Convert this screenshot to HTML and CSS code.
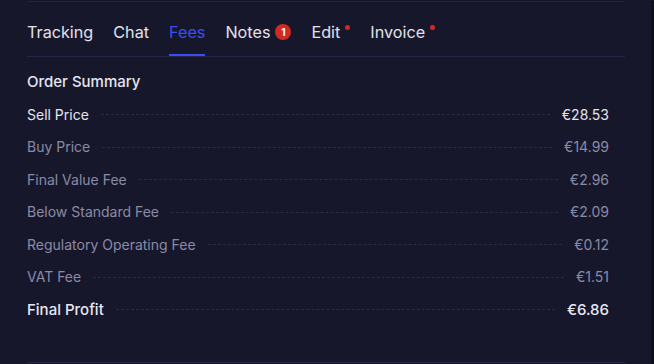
FILE: index.html
```html
<!DOCTYPE html>
<html lang="en">
<head>
  <meta charset="UTF-8" />
  <meta name="viewport" content="width=device-width, initial-scale=1.0"/>
  <title>Order Fees</title>
  <link rel="stylesheet" href="styles.css">
</head>
<body>
  <div class="panel">
    <div class="inner">
      <nav class="tabs">
        <span class="tab">Tracking</span>
        <span class="tab">Chat</span>
        <span class="tab active">Fees</span>
        <span class="tab">Notes <span class="badge">1</span></span>
        <span class="tab">Edit<span class="dot"></span></span>
        <span class="tab">Invoice<span class="dot"></span></span>
      </nav>

      <section class="summary">
        <h2>Order Summary</h2>
        <div class="row strong"><span class="label">Sell Price</span><span class="fill"></span><span class="value">€28.53</span></div>
        <div class="row"><span class="label">Buy Price</span><span class="fill"></span><span class="value">€14.99</span></div>
        <div class="row"><span class="label">Final Value Fee</span><span class="fill"></span><span class="value">€2.96</span></div>
        <div class="row"><span class="label">Below Standard Fee</span><span class="fill"></span><span class="value">€2.09</span></div>
        <div class="row"><span class="label">Regulatory Operating Fee</span><span class="fill"></span><span class="value">€0.12</span></div>
        <div class="row"><span class="label">VAT Fee</span><span class="fill"></span><span class="value">€1.51</span></div>
        <div class="row total"><span class="label">Final Profit</span><span class="fill"></span><span class="value">€6.86</span></div>
      </section>
    </div>
  </div>
</body>
</html>
```

FILE: styles.css
```css
* { box-sizing: border-box; margin: 0; padding: 0; }
html, body { height: 100%; background: #16162a; overflow: hidden; }
body { font-family: Inter, 'Noto Sans', sans-serif; color: #e4e4ee; }

.panel {
  height: 364px;
  width: 654px;
  padding-left: 27px;
  border-right: 3px solid #0f0f1c;
  background: #17172b;
}
.inner {
  width: 598px;
  height: 362px;
  border-top: 1px solid #23233f;
  border-bottom: 1px solid #26264a;
  margin-top: 1px;
}

.tabs {
  display: flex;
  gap: 20px;
  height: 55px;
  border-bottom: 1px solid #25254a;
}
.tab {
  position: relative;
  display: flex;
  align-items: center;
  padding-top: 6px;
  font-size: 16.2px;
  color: #e2e2ec;
}
.tab.active { color: #3b4ef4; }
.tab.active::after {
  content: '';
  position: absolute;
  left: 0; right: 0; bottom: 0;
  height: 2px;
  background: #3b4ef4;
}
.badge {
  display: inline-flex;
  justify-content: center;
  align-items: center;
  width: 16px; height: 16px;
  margin-left: 5px;
  border-radius: 50%;
  background: #d12a22;
  color: #fff;
  font-size: 10px;
  font-weight: 700;
}
.dot {
  align-self: flex-start;
  width: 5px; height: 5px;
  margin: 17px 0 0 5px;
  border-radius: 50%;
  background: #d12a22;
}

.summary { padding-right: 16px; }
.summary h2 {
  font-size: 15px;
  font-weight: 500;
  color: #e6e6f0;
  margin-top: 15px;
  height: 26px;
}
.row {
  display: flex;
  align-items: center;
  height: 32.5px;
  font-size: 14px;
  color: #8a8aa6;
}
.fill {
  flex: 1;
  margin: 1px 12px 0 12px;
  border-top: 1px dashed #2a2a48;
}
.row.strong { color: #e4e4ee; }
.row.total { color: #e8e8f2; font-size: 15px; font-weight: 500; }
```
